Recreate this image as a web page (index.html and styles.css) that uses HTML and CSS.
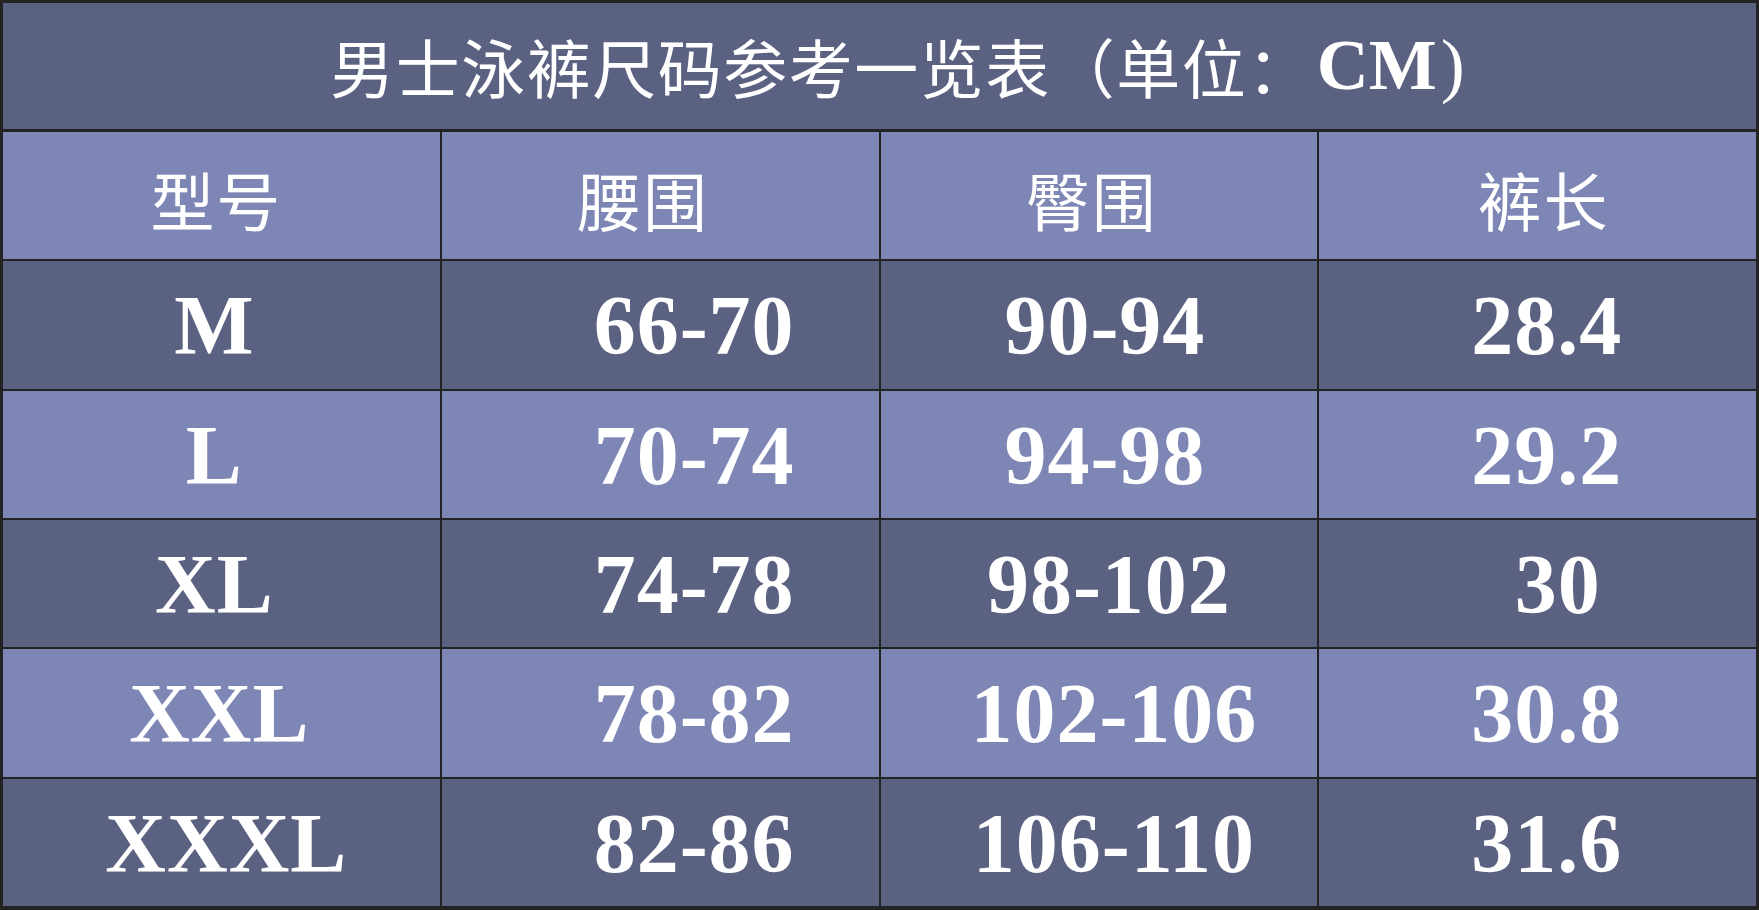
FILE: index.html
```html
<!DOCTYPE html>
<html lang="zh">
<head>
<meta charset="utf-8">
<title>男士泳裤尺码参考一览表</title>
<link rel="stylesheet" href="styles.css">
</head>
<body>
<div class="chart">
  <div class="title">男士泳裤尺码参考一览表（单位：<span class="latin">CM</span><span class="paren">)</span></div>

  <div class="cell head c0">型号</div>
  <div class="cell head c1">腰围</div>
  <div class="cell head c2">臀围</div>
  <div class="cell head c3">裤长</div>

  <div class="cell dark num c0">M</div>
  <div class="cell dark num c1">66-70</div>
  <div class="cell dark num c2">90-94</div>
  <div class="cell dark num c3">28.4</div>

  <div class="cell light num c0">L</div>
  <div class="cell light num c1">70-74</div>
  <div class="cell light num c2">94-98</div>
  <div class="cell light num c3">29.2</div>

  <div class="cell dark num c0">XL</div>
  <div class="cell dark num c1">74-78</div>
  <div class="cell dark num c2 wide">98-102</div>
  <div class="cell dark num c3 shift">30</div>

  <div class="cell light num c0 xxl">XXL</div>
  <div class="cell light num c1">78-82</div>
  <div class="cell light num c2 wider">102-106</div>
  <div class="cell light num c3">30.8</div>

  <div class="cell dark num c0 xxxl">XXXL</div>
  <div class="cell dark num c1">82-86</div>
  <div class="cell dark num c2 wider">106-110</div>
  <div class="cell dark num c3">31.6</div>
</div>
</body>
</html>
```

FILE: styles.css
```css
html, body {
  margin: 0;
  padding: 0;
  background: #222222;
}

.chart {
  width: 1759px;
  height: 910px;
  box-sizing: border-box;
  padding: 3px 3px 4px 3px;
  background: #232323;
  display: grid;
  grid-template-columns: repeat(4, 1fr);
  grid-template-rows: 127px repeat(6, 1fr);
  column-gap: 2px;
  row-gap: 2px;
  color: #ffffff;
}

.title {
  grid-column: 1 / span 4;
  background: #5b6180;
  display: flex;
  align-items: center;
  justify-content: center;
  padding-left: 36px;
  padding-bottom: 2px;
  font-family: "Noto Sans CJK SC", sans-serif;
  font-size: 64px;
  letter-spacing: 1.5px;
  margin-bottom: 1px;
}

.title .latin {
  font-family: "Liberation Serif", serif;
  font-weight: bold;
  font-size: 72px;
  letter-spacing: 0;
  padding-left: 4px;
}

.title .paren {
  font-family: "Liberation Serif", serif;
  font-weight: normal;
  font-size: 72px;
  letter-spacing: 0;
  padding-left: 4px;
}

.cell {
  display: flex;
  align-items: center;
  justify-content: center;
  box-sizing: border-box;
}

.head {
  background: #7d86b5;
  font-family: "Noto Sans CJK SC", sans-serif;
  font-size: 64px;
  letter-spacing: 2px;
  padding-top: 4px;
}

.head.c1 { padding-right: 34px; }
.head.c2 { padding-right: 14px; }
.head.c3 { padding-left: 12px; }
.head.c0 { padding-right: 10px; }

.dark { background: #5b6180; }
.light { background: #7d86b5; }

.num {
  font-family: "Liberation Serif", serif;
  font-weight: bold;
  font-size: 84px;
  letter-spacing: 1px;
  padding-top: 2px;
}

.num.c0 { padding-right: 14px; }
.num.c0.xxl { padding-right: 4px; }
.num.c0.xxxl { padding-left: 10px; padding-right: 0; }
.num.c1 { padding-left: 68px; }
.num.c2 { padding-left: 12px; }
.num.c2.wide { padding-left: 20px; }
.num.c2.wider { padding-left: 30px; }
.num.c3 { padding-left: 18px; }
.num.c3.shift { padding-left: 40px; }
```
